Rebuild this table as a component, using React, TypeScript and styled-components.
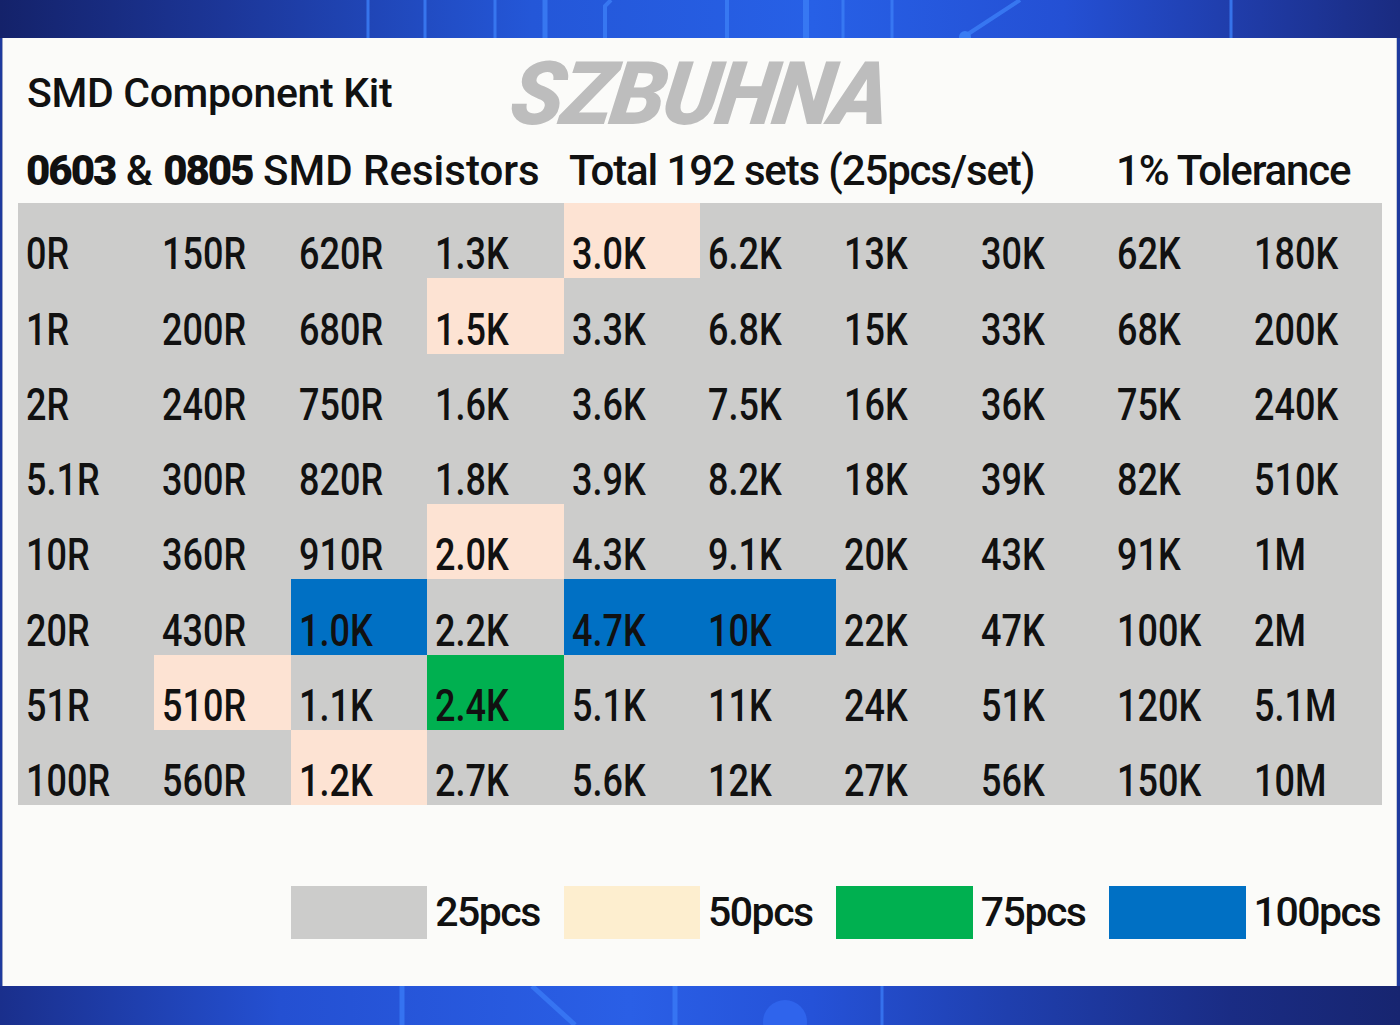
import * as React from 'react';
import styled, { createGlobalStyle } from 'styled-components';

type Tone = 'grey' | 'peach' | 'cream' | 'green' | 'blue';

const toneColors: Record<Tone, string> = {
  grey: '#cccccb',
  peach: '#fde3d3',
  cream: '#fdeecf',
  green: '#00b050',
  blue: '#0070c4',
};

const values: string[][] = [
  ['0R', '150R', '620R', '1.3K', '3.0K', '6.2K', '13K', '30K', '62K', '180K'],
  ['1R', '200R', '680R', '1.5K', '3.3K', '6.8K', '15K', '33K', '68K', '200K'],
  ['2R', '240R', '750R', '1.6K', '3.6K', '7.5K', '16K', '36K', '75K', '240K'],
  ['5.1R', '300R', '820R', '1.8K', '3.9K', '8.2K', '18K', '39K', '82K', '510K'],
  ['10R', '360R', '910R', '2.0K', '4.3K', '9.1K', '20K', '43K', '91K', '1M'],
  ['20R', '430R', '1.0K', '2.2K', '4.7K', '10K', '22K', '47K', '100K', '2M'],
  ['51R', '510R', '1.1K', '2.4K', '5.1K', '11K', '24K', '51K', '120K', '5.1M'],
  ['100R', '560R', '1.2K', '2.7K', '5.6K', '12K', '27K', '56K', '150K', '10M'],
];

// cells that come in more than 25pcs
const highlights: Record<string, Tone> = {
  '0-4': 'peach',
  '1-3': 'peach',
  '4-3': 'peach',
  '5-2': 'blue',
  '5-4': 'blue',
  '5-5': 'blue',
  '6-1': 'peach',
  '6-3': 'green',
  '7-2': 'peach',
};

const legend: { tone: Tone; label: string }[] = [
  { tone: 'grey', label: '25pcs' },
  { tone: 'cream', label: '50pcs' },
  { tone: 'green', label: '75pcs' },
  { tone: 'blue', label: '100pcs' },
];

const GlobalStyle = createGlobalStyle`
  html, body {
    margin: 0;
    padding: 0;
    background: #1f3a9c;
  }
  body {
    font-family: Roboto, "Liberation Sans", sans-serif;
    color: #111;
  }
`;

const Page = styled.div`
  width: 1400px;
  height: 1025px;
  display: flex;
  flex-direction: column;
  overflow: hidden;
  background: #1e3a9e;
`;

const Band = styled.div<{ $bottom?: boolean }>`
  flex: none;
  height: ${(p) => (p.$bottom ? '39px' : '38px')};
  background: ${(p) =>
    p.$bottom
      ? 'linear-gradient(90deg, #1a2f8c 0%, #2450d2 20%, #2a5fe6 45%, #2552d8 58%, #1f3fae 72%, #1a2c84 88%, #172570 100%)'
      : 'linear-gradient(90deg, #14226a 0%, #1c3698 16%, #2457d8 38%, #2760e6 58%, #2450d4 76%, #1f3aa4 90%, #1a2b80 100%)'};

  svg {
    display: block;
  }
`;

const Panel = styled.div`
  flex: 1;
  margin: 0 3px 0 2px;
  background: #fbfbf9;
  border-left: 1px solid #9aa3c4;
  border-right: 1px solid #c4c9d8;
  display: flex;
  flex-direction: column;
`;

const HeaderRow = styled.div`
  display: grid;
  grid-template-columns: 479px auto;
  align-items: start;
  padding: 12px 0 0 24px;
`;

const Title = styled.div`
  margin-top: 18px;
  font-size: 41px;
  line-height: 50px;
  font-weight: 500;
  letter-spacing: -0.35px;
  white-space: nowrap;
`;

const Logo = styled.div`
  font-size: 88px;
  line-height: 87px;
  font-weight: 900;
  font-style: italic;
  color: #bdbdbd;
  letter-spacing: -3px;
  transform: skewX(-8deg);
  transform-origin: left bottom;
  white-space: nowrap;
`;

const Subtitle = styled.div`
  display: grid;
  grid-template-columns: 543px 547px auto;
  padding-left: 23px;
  margin-top: 9px;
  font-size: 42px;
  line-height: 50px;
  font-weight: 500;
  white-space: nowrap;
`;

const Segment = styled.span<{ $spacing?: number }>`
  letter-spacing: ${(p) => p.$spacing ?? 0}px;
`;

const Bold = styled.b`
  font-weight: 900;
  letter-spacing: -2px;
`;

const Table = styled.div`
  width: 1364px;
  height: 602px;
  margin: 7px 0 0 15px;
  display: grid;
  grid-template-columns: repeat(10, 1fr);
  grid-template-rows: repeat(8, 1fr);
  background: ${toneColors.grey};
`;

const Cell = styled.div<{ $tone?: Tone }>`
  display: flex;
  align-items: flex-end;
  padding: 0 0 2px 8px;
  background: ${(p) => (p.$tone ? toneColors[p.$tone] : 'transparent')};
  font-size: 45px;
  line-height: 1;
  font-weight: 500;
`;

const Value = styled.span`
  display: inline-block;
  white-space: nowrap;
  transform: scaleX(0.8);
  transform-origin: left bottom;
`;

const Legend = styled.div`
  width: 1364px;
  height: 53px;
  margin: 81px 0 0 15px;
  display: grid;
  grid-template-columns: repeat(10, 1fr);
`;

const Swatch = styled.div<{ $tone: Tone; $first?: boolean }>`
  background: ${(p) => toneColors[p.$tone]};
  grid-column-start: ${(p) => (p.$first ? 3 : 'auto')};
`;

const LegendLabel = styled.div`
  display: flex;
  align-items: center;
  padding-left: 8px;
  font-size: 41px;
  line-height: 1;
  font-weight: 500;
  letter-spacing: -1.5px;
  white-space: nowrap;
`;

const TopCircuit: React.FC = () => (
  <svg width="1400" height="38" viewBox="0 0 1400 38">
    <g stroke="#3b7df4" strokeOpacity="0.85" fill="none">
      <line x1="368" y1="0" x2="368" y2="38" strokeWidth="3" />
      <line x1="425" y1="0" x2="425" y2="38" strokeWidth="3" />
      <line x1="495" y1="0" x2="495" y2="38" strokeWidth="3" />
      <line x1="545" y1="0" x2="545" y2="38" strokeWidth="5" />
      <path d="M605 38 V6 L611 0" strokeWidth="4" />
      <line x1="727" y1="0" x2="727" y2="38" strokeWidth="4" />
      <line x1="806" y1="0" x2="806" y2="38" strokeWidth="6" />
      <line x1="843" y1="0" x2="843" y2="38" strokeWidth="3" />
      <line x1="892" y1="0" x2="892" y2="38" strokeWidth="3" />
      <line x1="965" y1="36" x2="1020" y2="0" strokeWidth="4" />
      <line x1="1231" y1="0" x2="1231" y2="38" strokeWidth="3" />
    </g>
    <circle cx="965" cy="37" r="6" fill="#3b7df4" />
  </svg>
);

const BottomCircuit: React.FC = () => (
  <svg width="1400" height="39" viewBox="0 0 1400 39">
    <g stroke="#3a7bf6" strokeOpacity="0.8" fill="none">
      <line x1="402" y1="0" x2="402" y2="39" strokeWidth="5" />
      <line x1="532" y1="0" x2="575" y2="39" strokeWidth="5" />
      <line x1="675" y1="0" x2="675" y2="39" strokeWidth="5" />
      <line x1="882" y1="0" x2="882" y2="39" strokeWidth="3" />
    </g>
    <circle cx="785" cy="36" r="22" fill="#2f64ec" />
  </svg>
);

const App: React.FC = () => {
  return (
    <Page>
      <GlobalStyle />
      <Band>
        <TopCircuit />
      </Band>
      <Panel>
        <HeaderRow>
          <Title>SMD Component Kit</Title>
          <Logo>SZBUHNA</Logo>
        </HeaderRow>
        <Subtitle>
          <Segment>
            <Bold>0603</Bold> &amp; <Bold>0805</Bold> SMD Resistors
          </Segment>
          <Segment $spacing={-1.15}>Total 192 sets (25pcs/set)</Segment>
          <Segment $spacing={-1.2}>1% Tolerance</Segment>
        </Subtitle>
        <Table>
          {values.map((row, r) =>
            row.map((value, c) => (
              <Cell key={`${r}-${c}`} $tone={highlights[`${r}-${c}`]}>
                <Value>{value}</Value>
              </Cell>
            )),
          )}
        </Table>
        <Legend>
          {legend.map((item, i) => (
            <React.Fragment key={item.label}>
              <Swatch $tone={item.tone} $first={i === 0} />
              <LegendLabel>{item.label}</LegendLabel>
            </React.Fragment>
          ))}
        </Legend>
      </Panel>
      <Band $bottom>
        <BottomCircuit />
      </Band>
    </Page>
  );
};

export default App;
